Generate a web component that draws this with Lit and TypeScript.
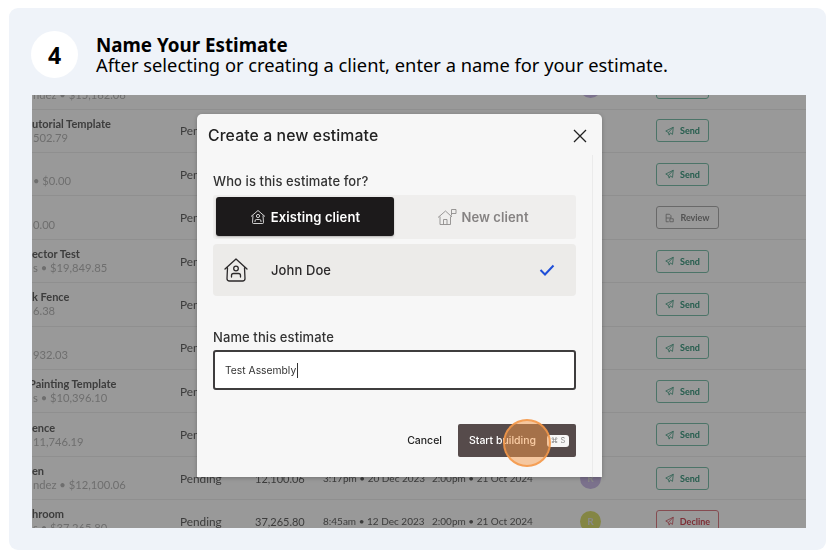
import { LitElement, html, css, svg } from "lit";
import { customElement } from "lit/decorators.js";

type Row = { name: string; sub: string; nameShift?: number; date: string; avatar: string; action: "send" | "review" | "decline"; amount: string };

const purple = "#cdbcea";
const rows: Row[] = [
  { name: "", sub: "ndez • $15,162.06", date: "3:17pm • 20 Dec 2023", avatar: purple, action: "send", amount: "15,162.06" },
  { name: "utorial Template", sub: "502.79", date: "3:17pm • 20 Dec 2023", avatar: purple, action: "send", amount: "502.79" },
  { name: "", sub: "• $0.00", date: "3:17pm • 20 Dec 2023", avatar: purple, action: "send", amount: "0.00" },
  { name: "", sub: "0.00", date: "3:17pm • 20 Dec 2023", avatar: purple, action: "review", amount: "0.00" },
  { name: "ector Test", sub: "s • $19,849.85", date: "3:17pm • 20 Dec 2023", avatar: purple, action: "send", amount: "19,849.85" },
  { name: "k Fence", sub: "6.38", date: "3:17pm • 20 Dec 2023", avatar: purple, action: "send", amount: "6.38" },
  { name: "", sub: "932.03", date: "3:17pm • 20 Dec 2023", avatar: purple, action: "send", amount: "932.03" },
  { name: "Painting Template", sub: "s • $10,396.10", nameShift: -3, date: "3:17pm • 20 Dec 2023", avatar: purple, action: "send", amount: "10,396.10" },
  { name: "ence", sub: "11,746.19", date: "3:17pm • 20 Dec 2023", avatar: purple, action: "send", amount: "11,746.19" },
  { name: "en", sub: "ndez • $12,100.06", date: "3:17pm • 20 Dec 2023", avatar: purple, action: "send", amount: "12,100.06" },
  { name: "hroom", sub: "s • $37,265.80", date: "8:45am • 12 Dec 2023", avatar: "#dcdf72", action: "decline", amount: "37,265.80" },
];

const plane = svg`<path d="M1 6.500 11 1.500 10 11 7 9 5.500 12 4.500 8.500ZM4.500 8.500 11 1.500" fill="none" stroke="currentColor" stroke-width="1" stroke-linejoin="round"/>`;
const doc = svg`<path d="M1.500 1.500H6L8 3.500V6.500H1.500ZM1.500 6.500V11.500H5M6.500 7.500H11V11.500H6.500Z" fill="none" stroke="currentColor" stroke-width="1"/>`;

@customElement("app-root")
export class AppRoot extends LitElement {
  static styles = css`
    :host { display: block; width: 835px; height: 555px; background: #fff; overflow: hidden; }
    .card { margin: 8px 9px 5px; height: 542px; box-sizing: border-box; background: #eff3f9; border-radius: 9px; padding: 23px 20px 22px 23px; display: flex; flex-direction: column; gap: 17px; }
    .head { display: flex; align-items: center; gap: 18px; height: 47px; margin-left: -1px; }
    .num { width: 47px; height: 47px; border-radius: 50%; background: #fff; display: flex; align-items: center; justify-content: center; font: 700 23px "Noto Sans", sans-serif; color: #000; }
    .head-text { font: 400 18.32px/20px "Noto Sans", sans-serif; color: #000; }
    .head-text b { display: block; font-size: 18.8px; font-weight: 700; }
    .shot { position: relative; width: 774px; height: 433px; overflow: hidden; background: #fff; font-family: Inter, "Open Sans", sans-serif; }
    .table { margin-top: -28.7px; filter: blur(0.7px); font-family: Lato, Inter, sans-serif; }
    .row { display: grid; grid-template-columns: 148px 75px 68px 109px 148px 76px 1fr; align-items: center; height: 43.4px; box-sizing: border-box; border-bottom: 1px solid #eeeeee; font-size: 11px; color: #555; white-space: nowrap; }
    .who { display: flex; flex-direction: column; line-height: 14px; overflow: hidden; }
    .who b { font-size: 11px; font-weight: 700; color: #666; height: 14px; }
    .who span { font-size: 11.2px; color: #b8b8b8; padding-left: 1px; }
    .status { font-size: 11.8px; font-weight: 400; color: #666; }
    .amount { font-size: 11px; font-weight: 400; color: #666; }
    .date { font-size: 10px; font-weight: 400; color: #666; }
    .avatar { width: 21px; height: 21px; border-radius: 50%; color: #e4e4e4; font-size: 10px; font-weight: 700; display: flex; align-items: center; justify-content: center; }
    .action { display: inline-flex; align-items: center; justify-content: center; gap: 6px; height: 23px; box-sizing: border-box; border: 1.3px solid; border-radius: 3px; font-size: 9px; font-weight: 700; }
    .action svg { width: 9px; height: 10px; }
    .send { width: 53px; color: #409c82; border-color: #7fc2ad; }
    .review { width: 63px; color: #8a8a8a; border-color: #b0b0b0; }
    .decline { width: 63px; color: #d24f5c; border-color: #de7f88; }
    .overlay { position: absolute; inset: 0; background: rgba(0, 0, 0, 0.4); }
    .modal { position: absolute; left: 165px; top: 19px; width: 405px; height: 363px; background: #f7f7f7; border-radius: 5px 5px 0 0; box-shadow: 0 1px 4px rgba(0,0,0,.25); color: #1d1b1c; display: flex; flex-direction: column; filter: blur(0.25px); }
    .m-head { display: flex; align-items: center; justify-content: space-between; height: 41px; padding: 2px 14px 0 11px; box-sizing: border-box; }
    .m-title { font-size: 15.8px; font-weight: 500; letter-spacing: 0.1px; color: #222; }
    .close { width: 16px; height: 16px; display: block; }
    .m-body { flex: 1; margin-right: 9px; border-right: 1px solid #ebebeb; padding: 18px 16px 0; display: flex; flex-direction: column; }
    .label { font-size: 13px; font-weight: 500; line-height: 16px; color: #333; letter-spacing: 0.1px; }
    .tabs { display: grid; grid-template-columns: 181px 1fr; margin-top: 6px; height: 44px; box-sizing: border-box; padding: 2px 0 3px 3px; background: #efeeed; border-radius: 3px; }
    .tab { display: flex; align-items: center; justify-content: center; gap: 5px; font-size: 13px; font-weight: 600; letter-spacing: 0.1px; }
    .tab svg { width: 16px; height: 16px; }
    .tab.on { background: #1c1a1b; color: #fff; border-radius: 3px; width: 178px; box-shadow: 0 1px 2px rgba(0,0,0,.25); }
    .tab.off { color: #858282; padding-right: 7px; }
    .tab.off svg { width: 20px; height: 18px; margin-right: -1px; }
    .client { display: flex; align-items: center; height: 52px; margin-top: 5px; padding: 0 21px 0 11px; background: #ecebe9; border-radius: 4px; }
    .client svg.house { width: 24px; height: 26px; }
    .client-name { flex: 1; margin-left: 23px; font-size: 13px; font-weight: 500; letter-spacing: 0.1px; color: #2b292a; }
    .check { width: 16px; height: 12px; }
    .name-label { margin-top: 33px; }
    .input { margin-top: 5px; height: 40px; box-sizing: border-box; border: 2px solid #3f3d3e; border-radius: 3px; background: #fff; display: flex; align-items: center; padding-left: 10px; font-size: 10.3px; font-weight: 400; color: #333; }
    .caret { width: 1px; height: 15px; background: #333; margin-left: 1px; }
    .foot { display: flex; align-items: center; justify-content: flex-end; margin-top: 34px; gap: 16px; }
    .cancel { font-size: 10.5px; font-weight: 500; color: #222; }
    .start { width: 118px; height: 33px; box-sizing: border-box; background: #564b4b; border-radius: 2px; display: flex; align-items: center; justify-content: space-between; padding: 0 7px 0 11px; color: #fff; font-size: 10.5px; font-weight: 500; }
    .kbd { width: 22px; height: 12px; border-radius: 3px; background: #f7f7f7; color: #888; font-size: 7.5px; font-weight: 400; display: flex; align-items: center; justify-content: center; }
    .spot { position: absolute; left: 471px; top: 324px; width: 48px; height: 48px; box-sizing: border-box; border-radius: 50%; border: 2px solid rgba(244, 152, 72, 0.85); background: rgba(244, 152, 72, 0.5); }
  `;

  private renderAction(a: Row["action"]) {
    const label = a === "send" ? "Send" : a === "review" ? "Review" : "Decline";
    return html`<div class="action ${a}"><svg viewBox="0 0 12 13">${a === "review" ? doc : plane}</svg>${label}</div>`;
  }

  render() {
    return html`<div class="card">
      <div class="head">
        <div class="num">4</div>
        <div class="head-text"><b>Name Your Estimate</b>After selecting or creating a client, enter a name for your estimate.</div>
      </div>
      <div class="shot">
        <div class="table">
          ${rows.map(r => html`<div class="row">
            <div class="who"><b style="margin-left:${r.nameShift ?? 0}px">${r.name}</b><span>${r.sub}</span></div>
            <div class="status">Pending</div>
            <div class="amount">${r.amount}</div>
            <div class="date">${r.date}</div>
            <div class="date">2:00pm • 21 Oct 2024</div>
            <div><div class="avatar" style="background:${r.avatar}">R</div></div>
            <div>${this.renderAction(r.action)}</div>
          </div>`)}
        </div>
        <div class="overlay"></div>
        <div class="modal">
          <div class="m-head">
            <div class="m-title">Create a new estimate</div>
            <svg class="close" viewBox="0 0 16 16"><path d="M2 2 14 14M14 2 2 14" stroke="#222" stroke-width="1.300" fill="none"/></svg>
          </div>
          <div class="m-body">
            <div class="label">Who is this estimate for?</div>
            <div class="tabs">
              <div class="tab on">
                <svg viewBox="0 0 16 16" fill="none" stroke="#fff" stroke-width="0.800"><path d="M1 7.500 8 1.500 15 7.500M3 6.500 2.500 13.500Q2.500 14.500 3.500 14.500H12.500Q13.500 14.500 13.500 13.500L13 6.500"/><circle cx="8" cy="7" r="1.600"/><path d="M5 13V12Q5 10.500 6.500 10.500H9.500Q11 10.500 11 12V13"/></svg>
                Existing client
              </div>
              <div class="tab off">
                <svg viewBox="0 0 20 18" fill="none" stroke="#8f8c8c" stroke-width="0.900"><path d="M1 9.500 8.500 3 15 9M3 8.500V16.500H13.500V8.500M6.500 16.500V11.500H10V16.500M14.500 7.500V1.500H19V5.500H14.500"/></svg>
                New client
              </div>
            </div>
            <div class="client">
              <svg class="house" viewBox="0 0 24 26" fill="none" stroke="#2b292a" stroke-width="1.300" stroke-linejoin="round" stroke-linecap="round"><path d="M1 12 12 2 23 12M3.500 11 3 21.500Q3 24 5.500 24H18.500Q21 24 21 21.500L20.500 11"/><circle cx="12" cy="11.500" r="2.300"/><path d="M7.500 20V18.500Q7.500 16.500 9.500 16.500H14.500Q16.500 16.500 16.500 18.500V20"/></svg>
              <div class="client-name">John Doe</div>
              <svg class="check" viewBox="0 0 16 12" fill="none"><path d="M1.500 6 6 10.500 14.500 1.500" stroke="#1f4fd8" stroke-width="2"/></svg>
            </div>
            <div class="label name-label">Name this estimate</div>
            <div class="input">Test Assembly<span class="caret"></span></div>
            <div class="foot">
              <div class="cancel">Cancel</div>
              <div class="start">Start building<span class="kbd">⌘ S</span></div>
            </div>
          </div>
        </div>
        <div class="spot"></div>
      </div>
    </div>`;
  }
}
